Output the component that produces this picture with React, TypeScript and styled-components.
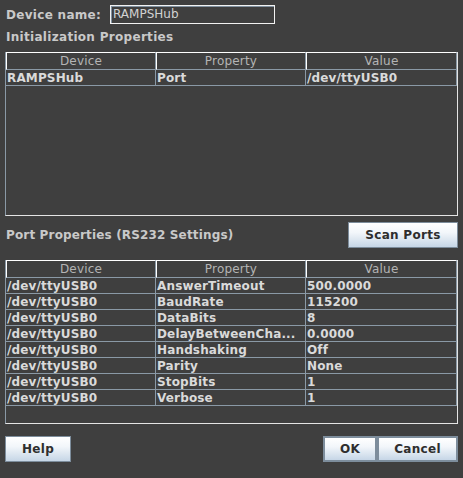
import React from "react";
import styled, { createGlobalStyle } from "styled-components";

const Global = createGlobalStyle`
  html, body { margin: 0; padding: 0; background: #3f3f3f; }
  body { font-family: "DejaVu Sans", "Liberation Sans", sans-serif; font-size: 12px; }
`;

const Dialog = styled.div`
  width: 463px;
  height: 478px;
  box-sizing: border-box;
  padding: 5px 5px 0 5px;
  background: #3f3f3f;
  display: flex;
  flex-direction: column;
`;

const NameRow = styled.div`
  display: flex;
  align-items: center;
  height: 19px;
`;

const Label = styled.span<{ $ls?: number }>`
  font-weight: bold;
  color: #c9c9c9;
  line-height: 14px;
  letter-spacing: ${(p) => p.$ls ?? 0.3}px;
  white-space: nowrap;
`;

const NameLabel = styled(Label)`
  width: 104px;
  padding-left: 1px;
`;

const TextField = styled.div`
  width: 165px;
  height: 19px;
  box-sizing: border-box;
  border: 1px solid #f2f2f2;
  box-shadow: inset 1px 1px 0 #8191a0;
  color: #d2d2d2;
  line-height: 17px;
  padding-left: 2px;
`;

const SectionTitle = styled(Label)`
  display: block;
  margin-top: 6px;
  margin-left: 1px;
`;

const PortTitle = styled(Label)`
  margin-left: 1px;
`;

const ScrollPane = styled.div<{ $mt: number }>`
  margin-top: ${(p) => p.$mt}px;
  width: 453px;
  height: 164px;
  box-sizing: border-box;
  border-left: 1px solid #8a99a6;
  border-right: 1px solid #e4e4e4;
  border-bottom: 1px solid #e4e4e4;
  display: flex;
  flex-direction: column;
`;

const Grid = styled.div`
  display: grid;
  grid-template-columns: 150px 150px 1fr;
`;

const HeadCell = styled.div`
  height: 18px;
  box-sizing: border-box;
  border-top: 1px solid #ffffff;
  border-left: 1px solid #ffffff;
  border-right: 1px solid #8a99a6;
  border-bottom: 1px solid #8a99a6;
  color: #b4b4b4;
  text-align: center;
  line-height: 16px;
  letter-spacing: 0.2px;
`;

const Cell = styled.div`
  height: 16px;
  box-sizing: border-box;
  border-right: 1px solid #8a99a6;
  border-bottom: 1px solid #8a99a6;
  color: #dadada;
  font-weight: bold;
  line-height: 16px;
  letter-spacing: 0.15px;
  padding-left: 1px;
  white-space: nowrap;
  overflow: hidden;
`;

const SectionRow = styled.div`
  margin-top: 6px;
  display: flex;
  align-items: center;
  justify-content: space-between;
`;

const Button = styled.button<{ $w: number; $thick?: boolean }>`
  width: ${(p) => p.$w}px;
  height: 26px;
  box-sizing: border-box;
  margin: 0;
  padding: 0;
  border: ${(p) => (p.$thick ? 2 : 1)}px solid #7d8d9c;
  background: linear-gradient(#ffffff, #f2f6fa 40%, #c6d6e6);
  font-family: "DejaVu Sans", "Liberation Sans", sans-serif;
  font-size: 12px;
  font-weight: bold;
  letter-spacing: 0.3px;
  color: #2e2e2e;
  cursor: pointer;
`;

const ButtonRow = styled.div`
  margin-top: 12px;
  display: flex;
  justify-content: space-between;
`;

const ButtonGroup = styled.div`
  display: flex;
`;

const initRows = [["RAMPSHub", "Port", "/dev/ttyUSB0"]];

const portRows = [
  ["AnswerTimeout", "500.0000"],
  ["BaudRate", "115200"],
  ["DataBits", "8"],
  ["DelayBetweenCha...", "0.0000"],
  ["Handshaking", "Off"],
  ["Parity", "None"],
  ["StopBits", "1"],
  ["Verbose", "1"],
].map(([p, v]) => ["/dev/ttyUSB0", p, v]);

function Table({ rows, mt }: { rows: string[][]; mt: number }) {
  return (
    <ScrollPane $mt={mt}>
      <Grid>
        <HeadCell>Device</HeadCell>
        <HeadCell>Property</HeadCell>
        <HeadCell>Value</HeadCell>
        {rows.map((r, i) =>
          r.map((c, j) => <Cell key={`${i}-${j}`}>{c}</Cell>)
        )}
      </Grid>
    </ScrollPane>
  );
}

export default function App() {
  return (
    <>
      <Global />
      <Dialog>
        <NameRow>
          <NameLabel>Device name:</NameLabel>
          <TextField>RAMPSHub</TextField>
        </NameRow>
        <SectionTitle>Initialization Properties</SectionTitle>
        <Table rows={initRows} mt={8} />
        <SectionRow>
          <PortTitle $ls={0.15}>Port Properties (RS232 Settings)</PortTitle>
          <Button $w={110}>Scan Ports</Button>
        </SectionRow>
        <Table rows={portRows} mt={12} />
        <ButtonRow>
          <Button $w={66}>Help</Button>
          <ButtonGroup>
            <Button $w={54} $thick>OK</Button>
            <Button $w={81} $thick>Cancel</Button>
          </ButtonGroup>
        </ButtonRow>
      </Dialog>
    </>
  );
}
